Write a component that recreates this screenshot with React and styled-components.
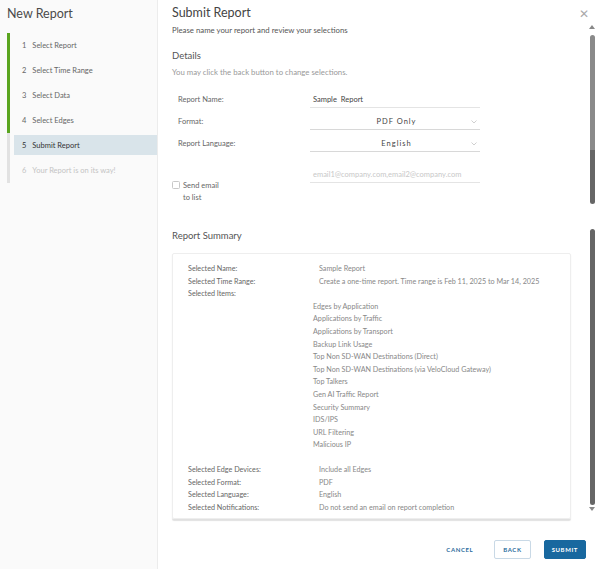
import React from "react";
import styled, { createGlobalStyle } from "styled-components";

const Global = createGlobalStyle`
  html, body { margin: 0; padding: 0; background: #fff; }
  body { font-family: Lato, "Open Sans", sans-serif; color: #555; }
  * { box-sizing: border-box; }
`;

const Page = styled.div`
  display: flex;
  width: 598px;
  height: 569px;
  overflow: hidden;
  background: #fff;
`;

const Sidebar = styled.aside`
  width: 158px;
  flex: none;
  background: #fafafa;
  border-right: 1px solid #ececec;
  padding-top: 5px;
`;

const SideTitle = styled.h1`
  margin: 0 0 0 7px;
  height: 18px;
  line-height: 18px;
  font-size: 12.5px;
  font-weight: 400;
  color: #4a4a4a;
`;

const Steps = styled.ol`
  list-style: none;
  margin: 10px 0 0 7px;
  padding: 0;
`;

const Step = styled.li`
  height: 25px;
  border-left: 3px solid ${(p) => (p.$done ? "#5aa51f" : "#e2e2e2")};
  padding: 2px 0 3px 4px;
  display: flex;
`;

const StepLabel = styled.div`
  flex: 1;
  display: flex;
  align-items: center;
  padding-left: 8px;
  gap: 6px;
  font-size: 7.5px;
  color: ${(p) => (p.$muted ? "#c4c4c4" : p.$active ? "#333" : "#666")};
  background: ${(p) => (p.$active ? "#d9e4ea" : "transparent")};
`;

const Main = styled.main`
  flex: 1;
  display: flex;
  flex-direction: column;
  min-width: 0;
`;

const Header = styled.div`
  display: flex;
  align-items: center;
  justify-content: space-between;
  height: 25px;
  padding: 0 9px 1px 14px;
`;

const Title = styled.h2`
  margin: 0;
  font-size: 12.5px;
  font-weight: 400;
  color: #444;
`;

const Close = styled.span`
  font-size: 12px;
  font-weight: 300;
  color: #aaa;
  line-height: 1;
  margin-top: 4px;
`;

const Body = styled.div`
  flex: 1;
  display: flex;
  min-height: 0;
`;

const Content = styled.div`
  flex: 1;
  padding: 0 17px 0 14px;
`;

const Intro = styled.p`
  margin: ${(p) => p.$mt || 0}px 0 0;
  height: 10px;
  line-height: 10px;
  font-size: 7.8px;
  color: ${(p) => (p.$light ? "#999" : "#555")};
`;

const SectionTitle = styled.h3`
  margin: ${(p) => p.$mt}px 0 0;
  height: 12px;
  line-height: 12px;
  font-size: 9.5px;
  font-weight: 400;
  color: #555;
`;

const Form = styled.div`
  display: flex;
  flex-direction: column;
  gap: 6px;
  margin-top: 15px;
  padding-left: 6px;
`;

const FormRow = styled.div`
  display: grid;
  grid-template-columns: 132px 170px;
  align-items: end;
  height: 16px;
  margin-top: ${(p) => p.$mt || 0}px;
`;

const Label = styled.span`
  font-size: 7.5px;
  color: #666;
  align-self: center;
  padding-bottom: 1px;
`;

const Field = styled.div`
  position: relative;
  height: 16px;
  display: flex;
  align-items: center;
  justify-content: ${(p) => (p.$center ? "center" : "flex-start")};
  border-bottom: 1px solid ${(p) => (p.$strong ? "#d8d8d8" : "#e4e4e4")};
  padding: 0 0 1px 3px;
  font-size: 7.5px;
  color: ${(p) => (p.$placeholder ? "#c8c8c8" : "#444")};
  letter-spacing: ${(p) => (p.$spaced ? "1px" : "0")};
  word-spacing: ${(p) => (p.$spaced ? "0" : "2px")};
`;

const Chevron = styled.svg`
  position: absolute;
  right: 3px;
  top: 6px;
`;

const CheckRow = styled.div`
  display: flex;
  gap: 3px;
  margin-top: -9px;
  margin-left: -6px;
`;

const Checkbox = styled.span`
  width: 8px;
  height: 8px;
  border: 1px solid #c8c8c8;
  border-radius: 1.5px;
  background: #fff;
  margin-top: 1px;
`;

const CheckText = styled.span`
  width: 40px;
  font-size: 7.5px;
  line-height: 12px;
  color: #666;
`;

const Card = styled.div`
  margin-top: 11px;
  border: 1px solid #eeeeee;
  border-radius: 2px;
  box-shadow: 0 1.5px 1px rgba(0, 0, 0, 0.12);
  padding: 9px 0 7px 15px;
  height: 266px;
`;

const SumRow = styled.div`
  display: grid;
  grid-template-columns: 131px 1fr;
  height: 12.6px;
  line-height: 12.6px;
  font-size: 7.2px;
  color: #888;
`;

const SumLabel = styled.span`
  color: #666;
`;

const ItemList = styled.ul`
  list-style: none;
  margin: 0 0 12px 125px;
  padding: 0;
  font-size: 7.2px;
  color: #888;
  line-height: 12.6px;
`;

const Track = styled.div`
  width: 8px;
  flex: none;
  margin-right: 2px;
  display: flex;
  flex-direction: column;
  align-items: center;
  padding-bottom: 14px;
`;

const Arrow = styled.span`
  width: 0;
  height: 0;
  border-left: 3px solid transparent;
  border-right: 3px solid transparent;
  ${(p) =>
    p.$down
      ? "border-top: 4px solid #888; margin-top: 2px;"
      : "border-bottom: 4px solid #888; margin-bottom: 6px;"}
`;

const Thumb = styled.span`
  width: 5px;
  border-radius: 3px;
  height: ${(p) => p.$h}px;
  margin-bottom: ${(p) => p.$mb || 0}px;
  background: ${(p) => p.$bg};
`;

const Footer = styled.div`
  height: 44px;
  display: flex;
  align-items: center;
  justify-content: flex-end;
  gap: 13px;
  padding: 5px 12px 0 0;
`;

const Button = styled.button`
  height: 19px;
  padding: 0 ${(p) => (p.$variant === "link" ? "4px" : p.$variant === "outline" ? "8px" : "7px")};
  margin-left: ${(p) => (p.$variant === "outline" ? "3px" : "0")};
  font-family: inherit;
  font-size: 6px;
  font-weight: 700;
  letter-spacing: 0.6px;
  border-radius: 2px;
  cursor: pointer;
  color: ${(p) => (p.$variant === "primary" ? "#fff" : "#2a6c9c")};
  background: ${(p) => (p.$variant === "primary" ? "#18689f" : "#fff")};
  border: 1px solid
    ${(p) =>
      p.$variant === "primary"
        ? "#18689f"
        : p.$variant === "outline"
        ? "#c9d9e6"
        : "transparent"};
`;

const steps = [
  "Select Report",
  "Select Time Range",
  "Select Data",
  "Select Edges",
  "Submit Report",
  "Your Report is on its way!",
];

const items = [
  "Edges by Application",
  "Applications by Traffic",
  "Applications by Transport",
  "Backup Link Usage",
  "Top Non SD-WAN Destinations (Direct)",
  "Top Non SD-WAN Destinations (via VeloCloud Gateway)",
  "Top Talkers",
  "Gen AI Traffic Report",
  "Security Summary",
  "IDS/IPS",
  "URL Filtering",
  "Malicious IP",
];

const ChevronIcon = () => (
  <Chevron width="6" height="4" viewBox="0 0 6 4">
    <path d="M0.5 0.5 L3 3 L5.5 0.5" fill="none" stroke="#bbb" strokeWidth="0.7" />
  </Chevron>
);

export default function App() {
  return (
    <Page>
      <Global />
      <Sidebar>
        <SideTitle>New Report</SideTitle>
        <Steps>
          {steps.map((s, i) => (
            <Step key={s} $done={i < 4}>
              <StepLabel $active={i === 4} $muted={i === 5}>
                <span>{i + 1}</span>
                <span>{s}</span>
              </StepLabel>
            </Step>
          ))}
        </Steps>
      </Sidebar>
      <Main>
        <Header>
          <Title>Submit Report</Title>
          <Close>✕</Close>
        </Header>
        <Body>
          <Content>
            <Intro>Please name your report and review your selections</Intro>
            <SectionTitle $mt={15}>Details</SectionTitle>
            <Intro $light $mt={5}>
              You may click the back button to change selections.
            </Intro>
            <Form>
              <FormRow>
                <Label>Report Name:</Label>
                <Field>Sample Report</Field>
              </FormRow>
              <FormRow>
                <Label>Format:</Label>
                <Field $center $spaced $strong>
                  PDF Only
                  <ChevronIcon />
                </Field>
              </FormRow>
              <FormRow>
                <Label>Report Language:</Label>
                <Field $center $spaced $strong>
                  English
                  <ChevronIcon />
                </Field>
              </FormRow>
              <FormRow $mt={9}>
                <span />
                <Field $placeholder>email1@company.com,email2@company.com</Field>
              </FormRow>
              <CheckRow>
                <Checkbox />
                <CheckText>Send email to list</CheckText>
              </CheckRow>
            </Form>
            <SectionTitle $mt={26}>Report Summary</SectionTitle>
            <Card>
              <SumRow>
                <SumLabel>Selected Name:</SumLabel>
                <span>Sample Report</span>
              </SumRow>
              <SumRow>
                <SumLabel>Selected Time Range:</SumLabel>
                <span>Create a one-time report. Time range is Feb 11, 2025 to Mar 14, 2025</span>
              </SumRow>
              <SumRow>
                <SumLabel>Selected Items:</SumLabel>
                <span />
              </SumRow>
              <ItemList>
                {items.map((it) => (
                  <li key={it}>{it}</li>
                ))}
              </ItemList>
              <SumRow>
                <SumLabel>Selected Edge Devices:</SumLabel>
                <span>Include all Edges</span>
              </SumRow>
              <SumRow>
                <SumLabel>Selected Format:</SumLabel>
                <span>PDF</span>
              </SumRow>
              <SumRow>
                <SumLabel>Selected Language:</SumLabel>
                <span>English</span>
              </SumRow>
              <SumRow>
                <SumLabel>Selected Notifications:</SumLabel>
                <span>Do not send an email on report completion</span>
              </SumRow>
            </Card>
          </Content>
          <Track>
            <Arrow />
            <Thumb $h={174} $mb={25} $bg="linear-gradient(#8a8a8a 0, #8a8a8a 68%, #666 68%, #666 100%)" />
            <Thumb $h={284} $bg="#666" />
            <Arrow $down />
          </Track>
        </Body>
        <Footer>
          <Button $variant="link">CANCEL</Button>
          <Button $variant="outline">BACK</Button>
          <Button $variant="primary">SUBMIT</Button>
        </Footer>
      </Main>
    </Page>
  );
}
